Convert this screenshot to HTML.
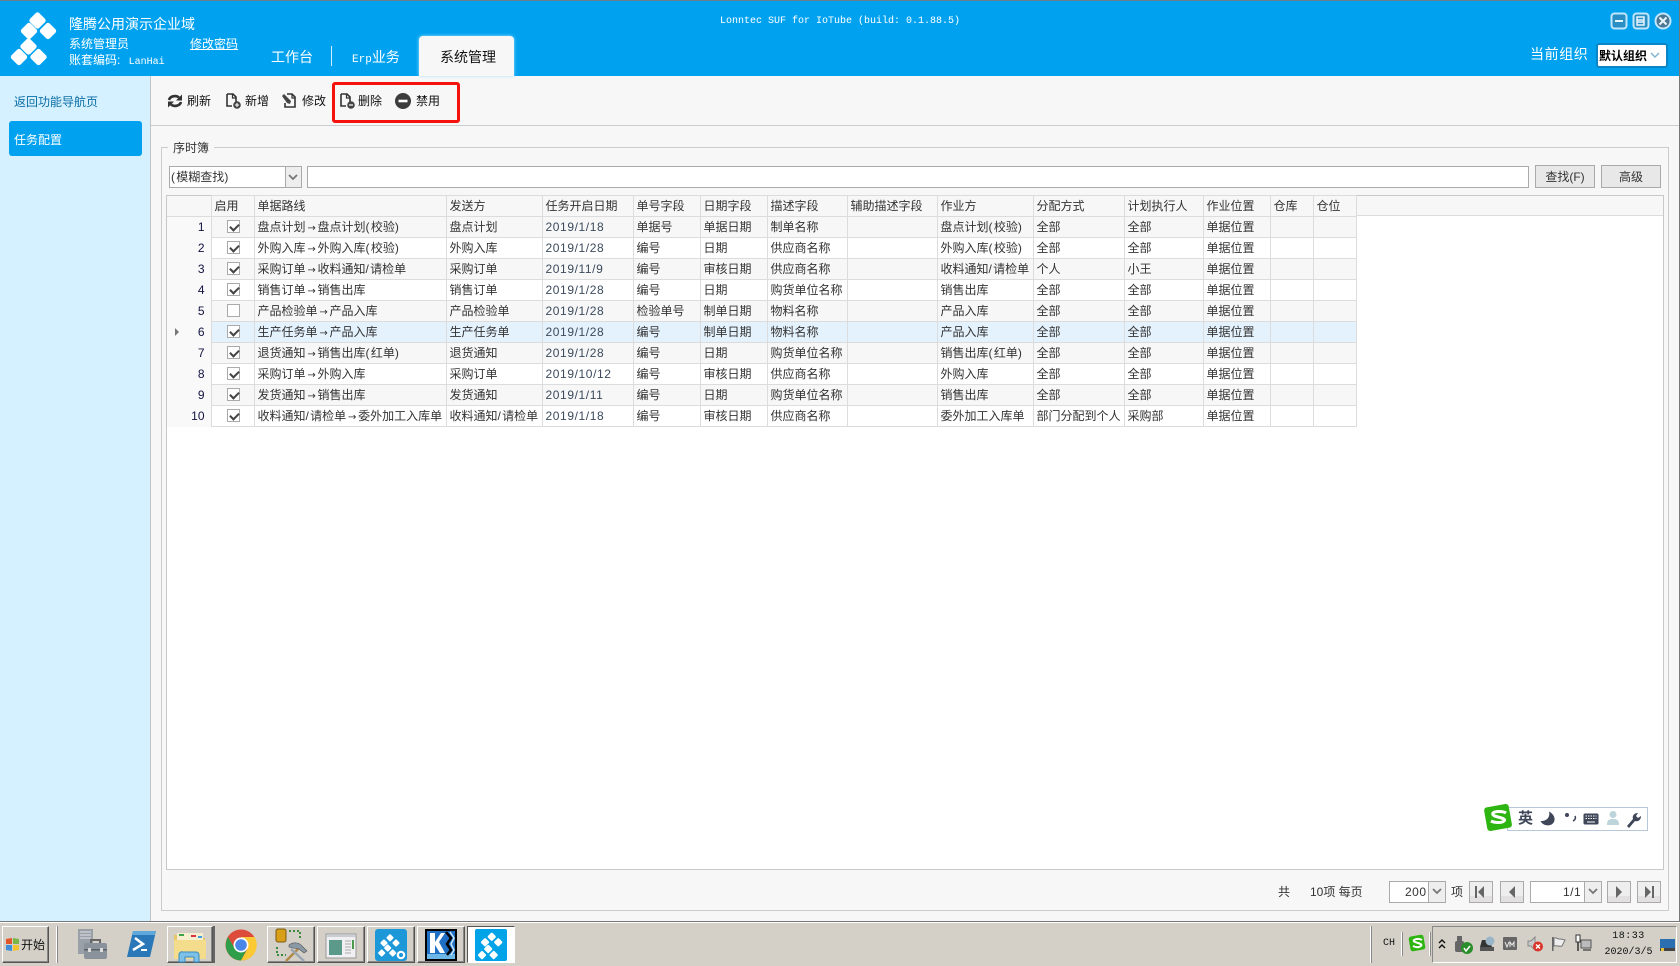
<!DOCTYPE html>
<html lang="zh"><head><meta charset="utf-8"><title>任务配置</title>
<style>
*{box-sizing:border-box}
html,body{margin:0;padding:0;width:1680px;height:966px;overflow:hidden;background:#d4d0c8}
body{font:12px/14px "Liberation Sans","WenQuanYi Zen Hei","Noto Sans CJK SC",sans-serif;color:#222;position:relative}
.a{position:absolute;white-space:nowrap}
svg{position:absolute;overflow:visible}
.w{color:#fff}
table{border-collapse:collapse;table-layout:fixed;position:absolute;left:167px;top:195px;width:1189px}
td{height:21px;padding:0 0 0 3px;border:1px solid #dcdcdc;white-space:nowrap;overflow:hidden;color:#333;line-height:19px;font-size:12px}
tr.h td{background:#f7f7f7;height:21px}
tr.o td{background:#f7f7f7}
tr.e td{background:#fff}
tr.s td{background:#e4f2fd}
tr td.n{background:#f9f9f9;border-left:0;border-top:0;border-bottom:0;text-align:right;padding:0 6px 0 0;color:#111140}
tr.h td.n{background:#f7f7f7;border-bottom:1px solid #dcdcdc}
td.d{letter-spacing:.6px;color:#3b4a5c}
td.c{padding:0;position:relative}
i.k{display:block;width:13px;height:13px;border:1px solid #aaa;background:#fff;position:relative;left:15px;top:-1px}
i.k.y:after{content:"";position:absolute;left:2px;top:1px;width:7px;height:4px;border-left:2px solid #444;border-bottom:2px solid #444;transform:rotate(-45deg) translate(-1px,1px)}
b.r{display:inline-block;width:12px;text-align:center;font:10px/12px "DejaVu Sans",sans-serif;color:#333}
em{font-style:normal;letter-spacing:1.3px}
.btn{position:absolute;background:#e8e8e8;border:1px solid #aaa;text-align:center;line-height:21px;color:#333}
.pg{position:absolute;top:881px;height:22px;width:24px;background:linear-gradient(#eee 0,#eee 70%,#e2e0e0 70%);border:1px solid #aaa}
.tb{position:absolute;top:926px;height:37px;background:#d4d0c8;border:1px solid;border-color:#fff #555 #555 #fff;box-shadow:inset -1px -1px 0 #888}
.sep{position:absolute;top:926px;height:37px;width:2px;background:#fff;border-right:1px solid #888}
</style></head><body>

<!-- window -->
<div class="a" style="left:0;top:0;width:1680px;height:1px;background:#6f7f8a"></div>
<div class="a" style="left:0;top:1px;width:1680px;height:75px;background:#00a2f0"></div>
<div class="a" style="left:0;top:76px;width:151px;height:845px;background:#d5f0fe;border-right:1px solid #c4c4c4"></div>
<div class="a" style="left:151px;top:76px;width:1528px;height:845px;background:#f7f7f7"></div>
<div class="a" style="left:1679px;top:1px;width:1px;height:921px;background:#777"></div>
<div class="a" style="left:0;top:921px;width:1680px;height:1px;background:#777"></div>

<!-- logo -->
<svg style="left:0;top:0" width="70" height="76" fill="#fff">
<rect x="31" y="14" width="13" height="13" rx="2.5" transform="rotate(45 37.5 20.5)"/>
<rect x="22.500" y="24.500" width="13" height="13" rx="2.5" transform="rotate(45 29 31)"/>
<rect x="41.500" y="24.500" width="13" height="13" rx="2.5" transform="rotate(45 48 31)"/>
<rect x="22" y="40" width="13" height="13" rx="2.5" transform="rotate(45 28.500 46.500)"/>
<rect x="12.500" y="50.500" width="13" height="13" rx="2.5" transform="rotate(45 19 57)"/>
<rect x="32" y="50.500" width="13" height="13" rx="2.5" transform="rotate(45 38.500 57)"/>
</svg>
<div class="a w" style="left:69px;top:16px;font-size:14px;line-height:16px">隆腾公用演示企业域</div>
<div class="a w" style="left:69px;top:37px">系统管理员</div>
<div class="a w" style="left:190px;top:37px;text-decoration:underline">修改密码</div>
<div class="a w" style="left:69px;top:53px">账套编码: <span style="font:10px/14px 'Liberation Mono',monospace;margin-left:5px">LanHai</span></div>
<div class="a w" style="left:720px;top:15px;font:10px/14px 'Liberation Mono',monospace">Lonntec SUF for IoTube (build: 0.1.88.5)</div>
<div class="a w" style="left:271px;top:49px;font-size:14px;line-height:16px">工作台</div>
<div class="a" style="left:331px;top:46px;width:1px;height:20px;background:#cfeeff"></div>
<div class="a w" style="left:352px;top:49px;font-size:14px;line-height:16px"><span style="font:11px/16px 'Liberation Mono',monospace">Erp</span>业务</div>
<div class="a" style="left:419px;top:36px;width:95px;height:40px;background:#f7f7f7;border-radius:4px 4px 0 0;box-shadow:0 0 3px #a9e0fb"></div>
<div class="a" style="left:440px;top:49px;font-size:14px;line-height:16px;color:#111">系统管理</div>

<!-- window buttons -->
<svg style="left:1610px;top:12px" width="64" height="18" fill="none">
<rect x="1.500" y="1.500" width="15" height="15" rx="3" stroke="#bfe6fb" stroke-width="2" fill="#2a8fc4"/>
<path d="M5 9h8" stroke="#e8f6fe" stroke-width="2"/>
<rect x="23.500" y="1.500" width="15" height="15" rx="3" stroke="#bfe6fb" stroke-width="2" fill="#2a8fc4"/>
<path d="M27 5h7v5h-7zM27 8h7v5h-7z" stroke="#e8f6fe" stroke-width="1.500"/>
<circle cx="53" cy="9" r="7.500" stroke="#bfe6fb" stroke-width="2" fill="#4f7691"/>
<path d="M49.500 5.500l7 7M56.500 5.500l-7 7" stroke="#e8f6fe" stroke-width="2"/>
</svg>
<div class="a w" style="left:1530px;top:46px;font-size:14px;line-height:16px;letter-spacing:.6px">当前组织</div>
<div class="a" style="left:1596px;top:43px;width:72px;height:25px;background:#fff;border:2px solid #0a85c5;border-radius:3px"></div>
<div class="a" style="left:1599px;top:49px;color:#000;font-weight:bold">默认组织</div>
<svg style="left:1650px;top:52px" width="10" height="7" fill="none"><path d="M1 1l4 4 4-4" stroke="#7db3d3" stroke-width="1.400"/></svg>

<!-- sidebar -->
<div class="a" style="left:14px;top:95px;color:#0a6ea5">返回功能导航页</div>
<div class="a" style="left:9px;top:121px;width:133px;height:35px;background:#00a2f0;border-radius:3px"></div>
<div class="a w" style="left:14px;top:133px">任务配置</div>

<!-- toolbar -->
<div class="a" style="left:151px;top:125px;width:1528px;height:1px;background:#ccc"></div>
<svg style="left:167px;top:93px" width="16" height="16" fill="none" stroke="#333" stroke-width="2.600">
<path d="M2 7a6 5 0 0 1 10-2.500"/><path d="M15 1.500v6h-6z" fill="#333" stroke="none"/>
<path d="M14 9a6 5 0 0 1-10 2.500"/><path d="M1 14.500v-6h6z" fill="#333" stroke="none"/></svg>
<div class="a" style="left:187px;top:94px;color:#111">刷新</div>
<svg style="left:226px;top:93px" width="16" height="16" fill="none"><path d="M1 1h6l3 3v6.500M6 13H1V1" stroke="#333" stroke-width="1.600"/><path d="M6.500 1v4h4" stroke="#333" stroke-width="1.200"/><circle cx="11" cy="12" r="3.800" fill="#444"/><path d="M9 12h4M11 10v4" stroke="#fff" stroke-width="1.100"/></svg>
<div class="a" style="left:245px;top:94px;color:#111">新增</div>
<svg style="left:281px;top:93px" width="16" height="16" fill="none"><path d="M6 1h5l3 3v10H4v-4" stroke="#333" stroke-width="1.600"/><path d="M11 1v4h3" stroke="#333" stroke-width="1.200"/><path d="M1 3l2-2 7 7-1 3-3-1z" fill="#444"/></svg>
<div class="a" style="left:302px;top:94px;color:#111">修改</div>
<div class="a" style="left:332px;top:82px;width:128px;height:41px;border:3px solid #f5120c;border-radius:3px"></div>
<svg style="left:340px;top:93px" width="16" height="16" fill="none"><path d="M1 1h6l3 3v6.500M6 13H1V1" stroke="#333" stroke-width="1.600"/><path d="M6.500 1v4h4" stroke="#333" stroke-width="1.200"/><circle cx="11" cy="12" r="3.800" fill="#444"/><path d="M9 12h4" stroke="#fff" stroke-width="1.200"/></svg>
<div class="a" style="left:358px;top:94px;color:#111">删除</div>
<svg style="left:395px;top:93px" width="16" height="16"><circle cx="8" cy="8" r="8" fill="#3c3c3c"/><rect x="3.500" y="6.700" width="9" height="2.600" fill="#fff"/></svg>
<div class="a" style="left:416px;top:94px;color:#111">禁用</div>

<!-- group -->
<div class="a" style="left:161px;top:147px;width:1508px;height:764px;border:1px solid #ccc"></div>
<div class="a" style="left:168px;top:141px;padding:0 5px;background:#f7f7f7;color:#333">序时簿</div>
<div class="a" style="left:169px;top:166px;width:133px;height:22px;background:#fff;border:1px solid #aaa"></div>
<div class="a" style="left:285px;top:167px;width:16px;height:20px;background:#eee;border-left:1px solid #aaa"></div>
<svg style="left:288px;top:174px" width="10" height="7" fill="none"><path d="M1 1l4 4 4-4" stroke="#777" stroke-width="1.800"/></svg>
<div class="a" style="left:171px;top:170px;color:#333"><em>(</em>模糊查找<em>)</em></div>
<div class="a" style="left:307px;top:166px;width:1222px;height:22px;background:#fff;border:1px solid #aaa"></div>
<div class="btn" style="left:1535px;top:165px;width:60px;height:23px;line-height:23px">查找(F)</div>
<div class="btn" style="left:1601px;top:165px;width:60px;height:23px;line-height:23px">高级</div>

<!-- grid -->
<div class="a" style="left:166px;top:195px;width:1498px;height:675px;background:#fff;border:1px solid #c8c8c8"></div>
<div class="a" style="left:167px;top:196px;width:1496px;height:20px;background:#f7f7f7;border-bottom:1px solid #dcdcdc"></div>
<table>
<colgroup><col style="width:44px"><col style="width:43px"><col style="width:192px"><col style="width:96px"><col style="width:91px"><col style="width:67px"><col style="width:67px"><col style="width:80px"><col style="width:90px"><col style="width:96px"><col style="width:91px"><col style="width:79px"><col style="width:67px"><col style="width:43px"><col style="width:43px"></colgroup>
<tr class="h"><td class="n"></td><td>启用</td><td>单据路线</td><td>发送方</td><td>任务开启日期</td><td>单号字段</td><td>日期字段</td><td>描述字段</td><td>辅助描述字段</td><td>作业方</td><td>分配方式</td><td>计划执行人</td><td>作业位置</td><td>仓库</td><td>仓位</td></tr>
<tr class="o"><td class="n">1</td><td class="c"><i class="k y"></i></td><td>盘点计划<b class="r">→</b>盘点计划<em>(</em>校验<em>)</em></td><td>盘点计划</td><td class="d">2019/1/18</td><td>单据号</td><td>单据日期</td><td>制单名称</td><td></td><td>盘点计划<em>(</em>校验<em>)</em></td><td>全部</td><td>全部</td><td>单据位置</td><td></td><td></td></tr>
<tr class="e"><td class="n">2</td><td class="c"><i class="k y"></i></td><td>外购入库<b class="r">→</b>外购入库<em>(</em>校验<em>)</em></td><td>外购入库</td><td class="d">2019/1/28</td><td>编号</td><td>日期</td><td>供应商名称</td><td></td><td>外购入库<em>(</em>校验<em>)</em></td><td>全部</td><td>全部</td><td>单据位置</td><td></td><td></td></tr>
<tr class="o"><td class="n">3</td><td class="c"><i class="k y"></i></td><td>采购订单<b class="r">→</b>收料通知<em>/</em>请检单</td><td>采购订单</td><td class="d">2019/11/9</td><td>编号</td><td>审核日期</td><td>供应商名称</td><td></td><td>收料通知<em>/</em>请检单</td><td>个人</td><td>小王</td><td>单据位置</td><td></td><td></td></tr>
<tr class="e"><td class="n">4</td><td class="c"><i class="k y"></i></td><td>销售订单<b class="r">→</b>销售出库</td><td>销售订单</td><td class="d">2019/1/28</td><td>编号</td><td>日期</td><td>购货单位名称</td><td></td><td>销售出库</td><td>全部</td><td>全部</td><td>单据位置</td><td></td><td></td></tr>
<tr class="o"><td class="n">5</td><td class="c"><i class="k"></i></td><td>产品检验单<b class="r">→</b>产品入库</td><td>产品检验单</td><td class="d">2019/1/28</td><td>检验单号</td><td>制单日期</td><td>物料名称</td><td></td><td>产品入库</td><td>全部</td><td>全部</td><td>单据位置</td><td></td><td></td></tr>
<tr class="s"><td class="n">6</td><td class="c"><i class="k y"></i></td><td>生产任务单<b class="r">→</b>产品入库</td><td>生产任务单</td><td class="d">2019/1/28</td><td>编号</td><td>制单日期</td><td>物料名称</td><td></td><td>产品入库</td><td>全部</td><td>全部</td><td>单据位置</td><td></td><td></td></tr>
<tr class="o"><td class="n">7</td><td class="c"><i class="k y"></i></td><td>退货通知<b class="r">→</b>销售出库<em>(</em>红单<em>)</em></td><td>退货通知</td><td class="d">2019/1/28</td><td>编号</td><td>日期</td><td>购货单位名称</td><td></td><td>销售出库<em>(</em>红单<em>)</em></td><td>全部</td><td>全部</td><td>单据位置</td><td></td><td></td></tr>
<tr class="e"><td class="n">8</td><td class="c"><i class="k y"></i></td><td>采购订单<b class="r">→</b>外购入库</td><td>采购订单</td><td class="d">2019/10/12</td><td>编号</td><td>审核日期</td><td>供应商名称</td><td></td><td>外购入库</td><td>全部</td><td>全部</td><td>单据位置</td><td></td><td></td></tr>
<tr class="o"><td class="n">9</td><td class="c"><i class="k y"></i></td><td>发货通知<b class="r">→</b>销售出库</td><td>发货通知</td><td class="d">2019/1/11</td><td>编号</td><td>日期</td><td>购货单位名称</td><td></td><td>销售出库</td><td>全部</td><td>全部</td><td>单据位置</td><td></td><td></td></tr>
<tr class="e"><td class="n">10</td><td class="c"><i class="k y"></i></td><td>收料通知<em>/</em>请检单<b class="r">→</b>委外加工入库单</td><td>收料通知<em>/</em>请检单</td><td class="d">2019/1/18</td><td>编号</td><td>审核日期</td><td>供应商名称</td><td></td><td>委外加工入库单</td><td>部门分配到个人</td><td>采购部</td><td>单据位置</td><td></td><td></td></tr>
</table>
<svg style="left:175px;top:328px" width="5" height="8"><path d="M0 0l4 4-4 4z" fill="#777"/></svg>

<!-- sogou bar -->
<div class="a" style="left:1507px;top:807px;width:141px;height:24px;background:#fff;border:1px solid #b8c8d8"></div>
<svg style="left:1484px;top:804px" width="28" height="27"><rect x="1.500" y="1.500" width="25" height="24" rx="3" fill="#2fb512" transform="rotate(-10 14 13.500)"/><path d="M22 9c-3-2-11-2-13 0-1 2 1 3 5 4s8 2 6 4c-2 2-9 2-13 0" fill="none" stroke="#fff" stroke-width="3"/></svg>
<div class="a" style="left:1518px;top:811px;font-size:15px;line-height:16px;font-weight:bold;color:#3e4658">英</div>
<svg style="left:1540px;top:810px" width="105" height="18">
<path d="M9 1.500c1.500 5-2 10-8.500 9.500 2 4 7 5.500 11 3.500s5-9 -2.500-13z" fill="#3e4658"/>
<circle cx="27" cy="5" r="2" fill="#3e4658"/><path d="M35 6c1 2 0 4-2 5" stroke="#3e4658" stroke-width="1.600" fill="none"/>
<rect x="43.500" y="3.500" width="15" height="11" rx="1.500" fill="#3e4658"/><path d="M45.500 6h11M45.500 8.500h11" stroke="#fff" stroke-dasharray="1.500 1" /><path d="M47 12h8" stroke="#fff"/>
<circle cx="73" cy="4.500" r="3.500" fill="#bcd4da"/><path d="M67 15c0-5 2-6 6-6s6 1 6 6z" fill="#bcd4da"/>
<path d="M87 16l6-7c-1-3 1-6 5-6l-2 3 2 2 3-2c0 4-3 6-6 5l-6 7z" fill="#3e4658"/>
</svg>

<!-- pager -->
<div class="a" style="left:1278px;top:885px;color:#333">共</div>
<div class="a" style="left:1310px;top:885px;color:#333">10项 每页</div>
<div class="a" style="left:1389px;top:881px;width:57px;height:22px;background:#fff;border:1px solid #aaa"></div>
<div class="a" style="left:1428px;top:882px;width:17px;height:20px;background:#eee;border-left:1px solid #aaa"></div>
<svg style="left:1432px;top:888px" width="10" height="7" fill="none"><path d="M1 1l4 4 4-4" stroke="#777" stroke-width="1.800"/></svg>
<div class="a" style="left:1405px;top:885px;color:#333;letter-spacing:.5px">200</div>
<div class="a" style="left:1451px;top:885px;color:#333">项</div>
<div class="pg" style="left:1469px"></div>
<svg style="left:1475px;top:885px" width="12" height="14" fill="#666"><rect x="0" y="1" width="2" height="12"/><path d="M9 1v12l-6-6z"/></svg>
<div class="pg" style="left:1500px"></div>
<svg style="left:1506px;top:885px" width="12" height="14" fill="#666"><path d="M9 1v12l-6-6z"/></svg>
<div class="a" style="left:1530px;top:881px;width:72px;height:22px;background:#fff;border:1px solid #aaa"></div>
<div class="a" style="left:1584px;top:882px;width:17px;height:20px;background:#eee;border-left:1px solid #aaa"></div>
<svg style="left:1588px;top:888px" width="10" height="7" fill="none"><path d="M1 1l4 4 4-4" stroke="#777" stroke-width="1.800"/></svg>
<div class="a" style="left:1563px;top:885px;color:#333;letter-spacing:.5px">1/1</div>
<div class="pg" style="left:1607px"></div>
<svg style="left:1613px;top:885px" width="12" height="14" fill="#666"><path d="M3 1v12l6-6z"/></svg>
<div class="pg" style="left:1637px"></div>
<svg style="left:1643px;top:885px" width="12" height="14" fill="#666"><path d="M2 1v12l6-6z"/><rect x="9" y="1" width="2" height="12"/></svg>

<!-- taskbar -->
<div class="a" style="left:0;top:922px;width:1680px;height:44px;background:#d4d0c8;border-top:1px solid #fff"></div>
<div class="tb" style="left:2px;width:47px"></div>
<svg style="left:5px;top:937px" width="15" height="15"><path d="M1 2l6-1v6H1z" fill="#e2562a"/><path d="M8 1l6 1v5H8z" fill="#7ab648"/><path d="M1 8h6v6l-6-1z" fill="#3f8fd6"/><path d="M8 8h6v5l-6 1z" fill="#f4c22f"/></svg>
<div class="a" style="left:21px;top:938px;color:#111">开始</div>
<div class="sep" style="left:56px"></div>

<svg style="left:76px;top:928px" width="32" height="34">
<rect x="2" y="1" width="15" height="25" fill="#9aa0a8"/><path d="M4 4h11M4 7h11M4 10h11" stroke="#e2e4e8"/>
<rect x="8" y="15" width="23" height="16" rx="2" fill="#8a929c"/><path d="M15 15v-3h9v3" fill="none" stroke="#666" stroke-width="2"/><rect x="8" y="21" width="23" height="1.500" fill="#5c6268"/><rect x="12" y="20" width="3" height="4" fill="#ddd"/><rect x="24" y="20" width="3" height="4" fill="#ddd"/>
</svg>
<svg style="left:127px;top:930px" width="30" height="28"><path d="M6 1h23l-6 26H0z" fill="#2a78b8"/><path d="M6 1h23l-1 4H5z" fill="#5fa8dc"/><path d="M8 8l8 6-10 6" fill="none" stroke="#fff" stroke-width="2.500"/><path d="M14 20h6" stroke="#fff" stroke-width="2"/></svg>

<div class="tb" style="left:167px;width:46px"></div>
<div class="sep" style="left:213px;background:#666;border:0"></div>
<svg style="left:173px;top:932px" width="34" height="30">
<path d="M1 3h14l3 3h14v21H1z" fill="#e8c766"/><rect x="4" y="1" width="26" height="7" fill="#f6efcf"/>
<rect x="6" y="2" width="5" height="2" fill="#3fa34d"/><rect x="18" y="3" width="5" height="2" fill="#d34"/><rect x="25" y="4" width="4" height="2" fill="#3b9fe0"/>
<path d="M1 8h32v19H1z" fill="#f3dc8c"/>
<path d="M10 20h13a3 3 0 0 1 3 3v7h-5v-5h-9v5H6v-7a3 3 0 0 1 4-3z" fill="#7dc0e8" stroke="#3a8cc0"/>
</svg>

<svg style="left:225px;top:929px" width="32" height="32">
<circle cx="16" cy="16" r="15.500" fill="#dd4b3a"/>
<path d="M3 8A15.500 15.500 0 0 0 16 31.500L22 20 10 20z" fill="#2f9e48"/>
<path d="M16 8h13.500A15.500 15.500 0 0 1 16 31.500L23 19z" fill="#fbc933"/>
<circle cx="16" cy="16" r="7.500" fill="#fff"/><circle cx="16" cy="16" r="5.800" fill="#4a86e8"/>
</svg>

<div class="tb" style="left:267px;width:48px"></div>
<svg style="left:274px;top:928px" width="36" height="34">
<rect x="2" y="1" width="10" height="13" rx="2" fill="#d8a018" stroke="#7a5a10"/>
<path d="M15 3h11v9M3 19v8h9" fill="none" stroke="#3b8a3b" stroke-width="2" stroke-dasharray="2 2"/>
<path d="M12 33l14-14" stroke="#b08a4a" stroke-width="2.500"/>
<path d="M15 17c4-3 10-3 13 1l5 5-3 2-5-4-6-1-4-1z" fill="#8a97a4" stroke="#555" stroke-width=".6"/>
<path d="M17 21l13 12" stroke="#9aa6b2" stroke-width="2.500"/>
</svg>

<div class="tb" style="left:317px;width:48px"></div>
<svg style="left:325px;top:933px" width="32" height="26"><rect x="1" y="1" width="30" height="24" fill="#f0f0f2" stroke="#999"/><rect x="2" y="2" width="28" height="2" fill="#c9ccd2"/><rect x="4" y="7" width="13" height="15" fill="#5b9a8a"/><path d="M20 8h6M20 11h6M20 14h6M20 17h6M20 20h6" stroke="#aaa"/><rect x="27" y="7" width="2" height="9" fill="#4c9a4c"/></svg>

<div class="tb" style="left:367px;width:48px"></div>
<svg style="left:375px;top:929px" width="32" height="32"><rect width="32" height="32" rx="3" fill="#1c97d8"/><g fill="#fff"><rect x="12.200" y="6" width="5.600" height="5.600" rx="1" transform="rotate(45 15 8.800)"/><rect x="6.200" y="11.200" width="5.600" height="5.600" rx="1" transform="rotate(45 9 14)"/><rect x="18.200" y="11.200" width="5.600" height="5.600" rx="1" transform="rotate(45 21 14)"/><rect x="9.900" y="16.200" width="5.600" height="5.600" rx="1" transform="rotate(45 12.700 19)"/><rect x="3.900" y="21.200" width="5.600" height="5.600" rx="1" transform="rotate(45 6.700 24)"/><rect x="14.900" y="21.200" width="5.600" height="5.600" rx="1" transform="rotate(45 17.700 24)"/></g><circle cx="26" cy="26" r="3.200" fill="none" stroke="#fff" stroke-width="2.200"/></svg>

<div class="tb" style="left:417px;width:48px"></div>
<svg style="left:425px;top:929px" width="32" height="32"><rect width="32" height="32" fill="#000"/><rect x="2" y="2" width="28" height="28" fill="#1f6fc4"/><rect x="2" y="25" width="28" height="5" fill="#6db6e8"/><path d="M5 4h5v9l6-9h4l-6 9 6 11h-5l-5-8v8H5z" fill="#fff"/><path d="M21 3l5 6-4 6 4 6-4 5" fill="none" stroke="#000" stroke-width="2.500"/><path d="M25 3l4 6-3 6 3 6-3 5" fill="none" stroke="#cfe6f7" stroke-width="1.500"/></svg>

<div class="a" style="left:467px;top:926px;width:48px;height:37px;background:#fff;border:1px solid;border-color:#555 #fff #fff #555"></div>
<svg style="left:475px;top:929px" width="32" height="32"><rect width="32" height="32" rx="2" fill="#00a2e8"/><g fill="#fff"><rect x="13.500" y="4.500" width="6.500" height="6.500" rx="1.200" transform="rotate(45 16.750 7.750)"/><rect x="6.800" y="10" width="6.500" height="6.500" rx="1.200" transform="rotate(45 10 13.250)"/><rect x="20" y="10" width="6.500" height="6.500" rx="1.200" transform="rotate(45 23.250 13.250)"/><rect x="10" y="16.800" width="6.500" height="6.500" rx="1.200" transform="rotate(45 13.250 20)"/><rect x="3.800" y="22.800" width="6.500" height="6.500" rx="1.200" transform="rotate(45 7 26)"/><rect x="15.500" y="22.800" width="6.500" height="6.500" rx="1.200" transform="rotate(45 18.750 26)"/></g></svg>

<!-- tray -->
<div class="sep" style="left:1370px"></div>
<div class="a" style="left:1383px;top:937px;font:10px/14px 'Liberation Mono',monospace;color:#111">CH</div>
<div class="sep" style="left:1401px;top:932px;height:24px"></div>
<svg style="left:1408px;top:934px" width="18" height="18"><rect x="1.500" y="1.500" width="15" height="15" rx="2.500" fill="#2fb512" transform="rotate(-10 9 9)"/><path d="M14 6c-2-1.500-6-1.500-8 0-1 1.500 1 2 4 3s4 1.500 3 3c-2 1.500-5 1.500-8 0" fill="none" stroke="#fff" stroke-width="2"/></svg>
<div class="sep" style="left:1429px;top:932px;height:24px"></div>
<div class="a" style="left:1432px;top:926px;width:245px;height:37px;border:1px solid;border-color:#888 #fff #fff #888"></div>
<svg style="left:1438px;top:939px" width="8" height="10" fill="none" stroke="#111" stroke-width="1.400"><path d="M1 4l3-3 3 3M1 9l3-3 3 3"/></svg>
<svg style="left:1455px;top:935px" width="18" height="20"><rect x="2" y="1" width="5" height="5" fill="#666"/><rect x="0" y="6" width="9" height="11" rx="2" fill="#666"/><circle cx="12" cy="13" r="6" fill="#2a8f2a"/><path d="M9 13l2 3 4-5" stroke="#fff" stroke-width="1.500" fill="none"/></svg>
<svg style="left:1479px;top:936px" width="16" height="16"><path d="M3 4h7l3 7H1z" fill="#333"/><rect x="1" y="11" width="14" height="4" fill="#555"/><circle cx="11" cy="5" r="4.500" fill="#9ab4c8"/></svg>
<svg style="left:1503px;top:937px" width="15" height="14"><rect width="14" height="13" rx="1" fill="#666"/><path d="M2 5l2 5 2-5M7 10V5l2 3 2-3v5" fill="none" stroke="#eee"/></svg>
<svg style="left:1527px;top:936px" width="17" height="16"><path d="M1 5h3l4-4v13l-4-4H1z" fill="#c8c8c8" stroke="#888"/><circle cx="11" cy="10.500" r="5" fill="#d9332a"/><path d="M9 8.500l4 4M13 8.500l-4 4" stroke="#fff" stroke-width="1.400"/></svg>
<svg style="left:1551px;top:936px" width="16" height="16"><rect x="1" y="1" width="1.500" height="14" fill="#666"/><path d="M3 2c3-1 4 2 7 1l4 1-3 6c-3 1-5-1-8 0z" fill="#eee" stroke="#777"/></svg>
<svg style="left:1575px;top:935px" width="17" height="17"><rect x="1" y="0" width="4" height="7" fill="#fff" stroke="#333"/><path d="M3 7v9" stroke="#333" stroke-width="1.500"/><rect x="6" y="5" width="10" height="8" fill="#bbb" stroke="#555"/><path d="M8 15h8" stroke="#555" stroke-width="1.500"/></svg>
<div class="a" style="left:1603px;top:930px;width:51px;text-align:center;font:10px/14px 'Liberation Mono',monospace;color:#111;letter-spacing:.5px">18:33</div>
<div class="a" style="left:1603px;top:946px;width:51px;text-align:center;font:10px/14px 'Liberation Mono',monospace;color:#111">2020/3/5</div>
<svg style="left:1660px;top:939px" width="16" height="13"><rect width="15" height="12" fill="#2c6fb0"/><rect y="9" width="15" height="3" fill="#444"/><rect x="1" y="9" width="3" height="3" fill="#e8c23a"/></svg>

</body></html>
